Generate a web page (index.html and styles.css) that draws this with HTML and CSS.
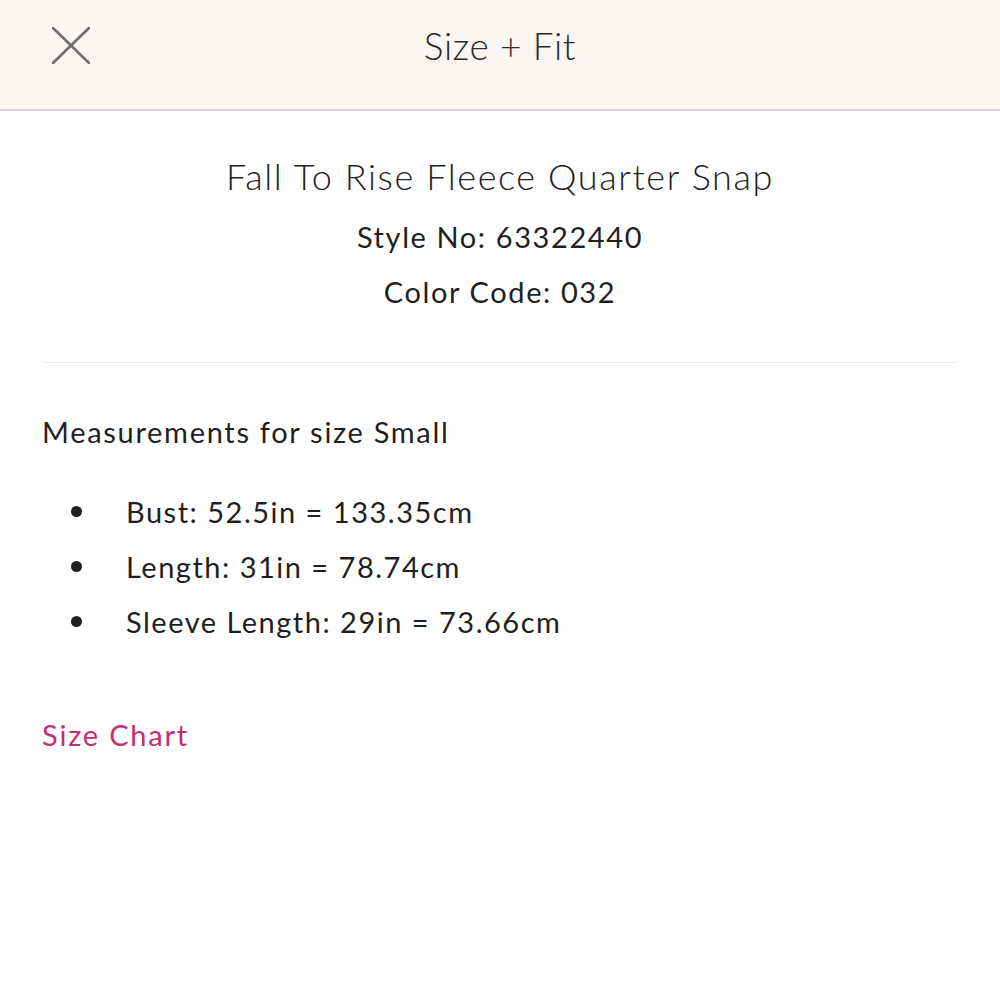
FILE: index.html
```html
<!DOCTYPE html>
<html>
<head>
<meta charset="utf-8">
<link rel="stylesheet" href="styles.css">
</head>
<body>
<header class="topbar">
  <button class="close" aria-label="Close">
    <svg width="38" height="37" viewBox="0 0 38 37"><path d="M1 1 L37 36 M37 1 L1 36" stroke="#6e6e6e" stroke-width="2.6" fill="none" stroke-linecap="round"/></svg>
  </button>
  <h1 class="title">Size + Fit</h1>
</header>
<main class="content">
  <section class="product">
    <h2 class="product-name">Fall To Rise Fleece Quarter Snap</h2>
    <p class="meta">Style No: 63322440</p>
    <p class="meta">Color Code: 032</p>
  </section>
  <hr class="divider">
  <section class="measure">
    <p class="measure-head">Measurements for size Small</p>
    <ul class="list">
      <li>Bust: 52.5in = 133.35cm</li>
      <li>Length: 31in = 78.74cm</li>
      <li>Sleeve Length: 29in = 73.66cm</li>
    </ul>
    <a class="chart" href="#">Size Chart</a>
  </section>
</main>
</body>
</html>
```
FILE: styles.css
```css
html, body { margin: 0; padding: 0; background: #fff; }
body { font-family: Lato, "Open Sans", sans-serif; color: #1f1f1f; }
.topbar {
  height: 109px;
  background: #faf6f2;
  border-bottom: 2px solid #d6d6d6;
  display: flex;
  align-items: center;
  justify-content: center;
  position: relative;
}
.close {
  position: absolute;
  left: 52px;
  top: 27px;
  background: none;
  border: 0;
  padding: 0;
  line-height: 0;
}
.title {
  margin: 0 0 18px 0;
  font-family: Lato, sans-serif;
  font-weight: 300;
  font-size: 37px;
  color: #2a2a2a;
  letter-spacing: 0.6px;
}
.content { padding: 0 42px; }
.product { text-align: center; padding-top: 43px; }
.product-name {
  margin: 0 0 17px 0;
  font-weight: 300;
  font-size: 36px;
  line-height: 44px;
  color: #222;
  letter-spacing: 1.6px;
}
.meta {
  margin: 0 0 11px 0;
  font-size: 29px;
  line-height: 44px;
  letter-spacing: 1.6px;
}
.divider {
  border: 0;
  border-top: 1px solid #ececec;
  margin: 48px 0 0 0;
}
.measure-head {
  margin: 49px 0 0 0;
  font-size: 29px;
  line-height: 40px;
  letter-spacing: 1.7px;
}
.list {
  list-style: none;
  margin: 32px 0 0 0;
  padding: 0 0 0 29px;
  font-size: 29px;
  line-height: 55px;
  letter-spacing: 1.5px;
}
.list li { display: flex; align-items: center; }
.list li::before {
  content: "";
  width: 11px;
  height: 11px;
  border-radius: 50%;
  background: #1f1f1f;
  margin-right: 44px;
  flex: none;
}
.chart {
  display: inline-block;
  margin-top: 66px;
  font-size: 29px;
  line-height: 40px;
  letter-spacing: 1.8px;
  color: #c2306f;
  text-decoration: none;
}
```
